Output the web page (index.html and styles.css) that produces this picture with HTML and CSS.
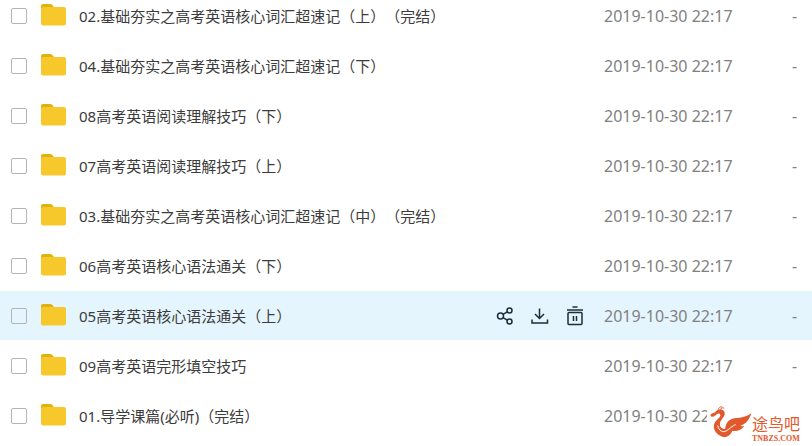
FILE: index.html
```html
<!DOCTYPE html>
<html lang="zh-CN">
<head>
  <meta charset="UTF-8">
  <meta name="viewport" content="width=device-width, initial-scale=1.0">
  <title>文件列表</title>
  <link rel="stylesheet" href="styles.css">
</head>
<body>
  <!-- Shared folder icon -->
  <svg class="sprite" aria-hidden="true">
    <symbol id="folder" viewBox="0 0 26 22">
      <path d="M0 8V2Q0 0 2 0H9Q10.500 0 11.500 1.200L13 3V8Z" fill="#dfb30f"/>
      <path d="M0 4.500Q0 3 2 3H23Q25 3 25 5V19.500Q25 21.500 23 21.500H2Q0 21.500 0 19.500Z" fill="#f7c82c"/>
    </symbol>
  </svg>

  <table class="file-list">
    <tbody>
      <tr>
        <td class="check"><input type="checkbox" id="f1"></td>
        <td class="icon"><svg class="folder"><use href="#folder"/></svg></td>
        <td class="name"><label for="f1">02.基础夯实之高考英语核心词汇超速记（上）（完结）</label></td>
        <td class="actions"></td>
        <td class="date">2019-10-30 22:17</td>
        <td class="size">-</td>
      </tr>
      <tr>
        <td class="check"><input type="checkbox" id="f2"></td>
        <td class="icon"><svg class="folder"><use href="#folder"/></svg></td>
        <td class="name"><label for="f2">04.基础夯实之高考英语核心词汇超速记（下）</label></td>
        <td class="actions"></td>
        <td class="date">2019-10-30 22:17</td>
        <td class="size">-</td>
      </tr>
      <tr>
        <td class="check"><input type="checkbox" id="f3"></td>
        <td class="icon"><svg class="folder"><use href="#folder"/></svg></td>
        <td class="name"><label for="f3">08高考英语阅读理解技巧（下）</label></td>
        <td class="actions"></td>
        <td class="date">2019-10-30 22:17</td>
        <td class="size">-</td>
      </tr>
      <tr>
        <td class="check"><input type="checkbox" id="f4"></td>
        <td class="icon"><svg class="folder"><use href="#folder"/></svg></td>
        <td class="name"><label for="f4">07高考英语阅读理解技巧（上）</label></td>
        <td class="actions"></td>
        <td class="date">2019-10-30 22:17</td>
        <td class="size">-</td>
      </tr>
      <tr>
        <td class="check"><input type="checkbox" id="f5"></td>
        <td class="icon"><svg class="folder"><use href="#folder"/></svg></td>
        <td class="name"><label for="f5">03.基础夯实之高考英语核心词汇超速记（中）（完结）</label></td>
        <td class="actions"></td>
        <td class="date">2019-10-30 22:17</td>
        <td class="size">-</td>
      </tr>
      <tr>
        <td class="check"><input type="checkbox" id="f6"></td>
        <td class="icon"><svg class="folder"><use href="#folder"/></svg></td>
        <td class="name"><label for="f6">06高考英语核心语法通关（下）</label></td>
        <td class="actions"></td>
        <td class="date">2019-10-30 22:17</td>
        <td class="size">-</td>
      </tr>
      <tr class="active">
        <td class="check"><input type="checkbox" id="f7"></td>
        <td class="icon"><svg class="folder"><use href="#folder"/></svg></td>
        <td class="name"><label for="f7">05高考英语核心语法通关（上）</label></td>
        <td class="actions">
          <div class="tools">
            <button type="button" aria-label="分享">
              <svg viewBox="0 0 18 18">
                <circle cx="4.500" cy="9" r="3"/>
                <circle cx="13.500" cy="3.500" r="2.500"/>
                <circle cx="13.500" cy="14.500" r="2.500"/>
                <path d="M7 7.300L11.300 4.800M7 10.700L11.300 13.200"/>
              </svg>
            </button>
            <button type="button" aria-label="下载">
              <svg viewBox="0 0 18 18">
                <path d="M8.500 1.500V11.500M4 7L8.500 11.500L13 7M1 12.500V16H16.500V12.500"/>
              </svg>
            </button>
            <button type="button" aria-label="删除">
              <svg viewBox="0 0 18 18">
                <path d="M6.500 0H11.500M1 3H17M7.500 9V14M10.500 9V14"/>
                <rect x="2" y="5.500" width="14" height="12" rx="1"/>
              </svg>
            </button>
          </div>
        </td>
        <td class="date">2019-10-30 22:17</td>
        <td class="size">-</td>
      </tr>
      <tr>
        <td class="check"><input type="checkbox" id="f8"></td>
        <td class="icon"><svg class="folder"><use href="#folder"/></svg></td>
        <td class="name"><label for="f8">09高考英语完形填空技巧</label></td>
        <td class="actions"></td>
        <td class="date">2019-10-30 22:17</td>
        <td class="size">-</td>
      </tr>
      <tr>
        <td class="check"><input type="checkbox" id="f9"></td>
        <td class="icon"><svg class="folder"><use href="#folder"/></svg></td>
        <td class="name"><label for="f9">01.导学课篇(必听)（完结）</label></td>
        <td class="actions"></td>
        <td class="date">2019-10-30 22:17</td>
        <td class="size"></td>
      </tr>
    </tbody>
  </table>

  <!-- Site watermark -->
  <div class="watermark">
    <svg class="bird" viewBox="15 15 130 100">
      <path d="M19 42C25 34 31 38 36 31C42 22 58 22 62 34C66 48 50 54 48 68C47 80 56 86 64 84C66 62 78 52 100 51C118 50 130 46 143 37C138 56 126 70 110 75C114 77 118 77 122 76C110 90 98 92 86 90C80 104 68 112 56 108C36 102 24 84 32 66C38 54 51 50 49 42C46 34 38 40 34 44C29 49 21 49 19 42Z" fill="#e2592d"/>
      <path d="M43 26C44 20 48 18 54 17M50 25C52 20 57 19 61 22" fill="none" stroke="#e2592d" stroke-width="3"/>
      <path d="M41 74C44 90 58 97 68 90C78 84 84 76 96 71" fill="none" stroke="#fff" stroke-width="3"/>
    </svg>
    <div class="brand">
      <span class="brand-name">途鸟吧</span>
      <span class="brand-url">TNBZS.COM</span>
    </div>
  </div>
</body>
</html>
```
FILE: styles.css
```css
body {
  margin: 0;
  min-height: 100vh;
  position: relative;
  overflow: hidden;
  background: #fff;
  color: #424e67;
  font-family: "Noto Sans", "Noto Sans CJK SC", sans-serif;
  font-size: 15px;
  text-spacing-trim: space-all;
}

.sprite {
  position: absolute;
  width: 0;
  height: 0;
}

/* list is scrolled a little, so the first row is cut at the top */
.file-list {
  width: 100%;
  margin-top: -9px;
  border-collapse: collapse;
  table-layout: fixed;
}

td {
  height: 49px;
  padding: 0;
  border-bottom: 1px solid #fff;
  vertical-align: middle;
  white-space: nowrap;
  line-height: 24px;
}

.active td {
  background: #e4f5fe;
}

.check {
  width: 41px;
}

.check input {
  appearance: none;
  display: block;
  width: 16px;
  height: 16px;
  margin: 0 0 0 11px;
  border: 1px solid #b4b4b4;
  border-radius: 2px;
  box-sizing: border-box;
}

.icon {
  width: 38px;
}

.folder {
  display: block;
  width: 26px;
  height: 22px;
  margin-bottom: 2px;
}

.name {
  color: #3c3c3c;
}

.actions {
  width: 108px;
}

.tools {
  display: flex;
  gap: 17px;
}

.tools button {
  width: 18px;
  height: 18px;
  padding: 0;
  border: none;
  background: none;
  cursor: pointer;
}

.tools svg {
  display: block;
  width: 18px;
  height: 18px;
  overflow: visible;
  fill: none;
  stroke: #1f2d3a;
  stroke-width: 1.5;
}

.date,
.size {
  color: #818181;
  font-size: 16px;
}

.date {
  width: 188px;
}

.size {
  width: 20px;
}

.watermark {
  position: absolute;
  right: 0;
  bottom: 0;
  display: flex;
  width: 103px;
  height: 40px;
  padding-left: 2px;
  background: #fff;
  color: #e2592d;
}

.bird {
  width: 43px;
  height: 33px;
}

.brand {
  display: flex;
  flex-direction: column;
  padding-top: 9px;
}

.brand-name {
  font-size: 16px;
  line-height: 18px;
}

.brand-url {
  margin-top: 2px;
  font-family: "Liberation Serif", serif;
  font-size: 8px;
  font-weight: bold;
  line-height: 8px;
}
```
